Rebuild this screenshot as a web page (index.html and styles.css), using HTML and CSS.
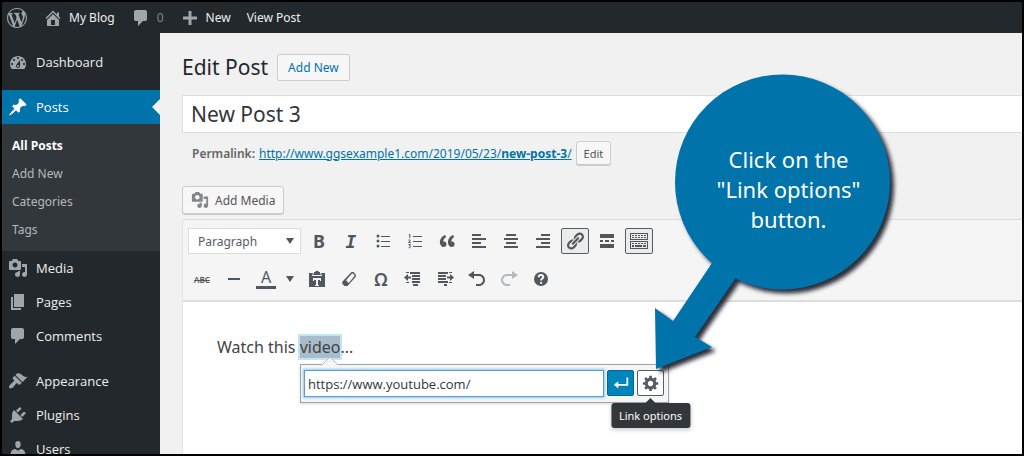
FILE: index.html
```html
<!DOCTYPE html>
<html lang="en">
<head>
<meta charset="utf-8">
<title>Edit Post</title>
<link rel="stylesheet" href="styles.css">
</head>
<body>
<div class="app">
  <header class="adminbar">
    <a class="bar-item bar-logo" href="#" aria-label="WordPress"><svg class="icon" viewBox="0 0 20 20"><path d="M20 10c0-5.51-4.49-10-10-10C4.48 0 0 4.49 0 10c0 5.52 4.48 10 10 10 5.51 0 10-4.48 10-10zM7.78 15.37L4.37 6.22c.55-.02 1.17-.08 1.17-.08.5-.06.44-1.13-.06-1.11 0 0-1.45.11-2.37.11-.18 0-.37 0-.58-.01C4.12 2.69 6.87 1.11 10 1.11c2.33 0 4.45.87 6.05 2.34-.68-.11-1.65.39-1.65 1.58 0 .74.45 1.36.9 2.1.35.61.55 1.36.55 2.46 0 1.49-1.4 5-1.4 5l-3.03-8.37c.54-.02.82-.17.82-.17.5-.05.44-1.25-.06-1.22 0 0-1.44.12-2.38.12-.87 0-2.33-.12-2.33-.12-.5-.03-.56 1.2-.06 1.22l.92.08 1.26 3.41zM17.41 10c.24-.64.74-1.87.43-4.25.7 1.29 1.05 2.71 1.05 4.25 0 3.29-1.73 6.24-4.4 7.78.97-2.59 1.94-5.2 2.92-7.78zM6.1 18.09C3.12 16.65 1.11 13.53 1.11 10c0-1.3.23-2.48.72-3.59C3.25 10.3 4.67 14.2 6.1 18.09zm4.03-6.63l2.58 6.98c-.86.29-1.76.45-2.71.45-.79 0-1.57-.11-2.29-.33.81-2.38 1.62-4.74 2.42-7.1z"/></svg></a>
    <a class="bar-item" href="#"><svg class="icon" viewBox="0 0 20 20"><path d="M16 8.5l1.53 1.53-1.06 1.06L10 4.6l-6.47 6.49-1.06-1.06L10 2.5l4 4v-2h2v4zm-6-2.46l6 5.99V18H4v-5.97zM12 17v-5H8v5h4z"/></svg>My Blog</a>
    <a class="bar-item bar-count" href="#"><svg class="icon" viewBox="0 0 20 20"><path d="M5 2h9q.82 0 1.41.59T16 4v7q0 .82-.59 1.41T14 13h-2l-5 5v-5H5q-.82 0-1.41-.59T3 11V4q0-.82.59-1.41T5 2z"/></svg>0</a>
    <a class="bar-item" href="#"><svg class="icon" viewBox="0 0 20 20"><path d="M17 8.500v3h-5.500V17h-3v-5.500H3v-3h5.500V3h3v5.500z"/></svg>New</a>
    <a class="bar-item" href="#">View Post</a>
  </header>
  <div class="body">
    <nav class="sidebar">
      <a class="menu-item menu-end" href="#"><svg class="icon" viewBox="0 0 20 20"><path fill-rule="evenodd" d="M3.760 17h12.480c1.100-1.370 1.760-3.110 1.760-5 0-4.420-3.580-8-8-8s-8 3.580-8 8c0 1.890.66 3.630 1.760 5zM10 5c.55 0 1 .45 1 1s-.45 1-1 1-1-.45-1-1 .45-1 1-1zM6 7c.55 0 1 .45 1 1s-.45 1-1 1-1-.45-1-1 .45-1 1-1zm8 0c.55 0 1 .45 1 1s-.45 1-1 1-1-.45-1-1 .45-1 1-1zm-5.370 5.550L12 8v6c0 1.100-.9 2-2 2s-2-.9-2-2c0-.57.24-1.080.63-1.450zM4 11c.55 0 1 .45 1 1s-.45 1-1 1-1-.45-1-1 .45-1 1-1zm12 0c.55 0 1 .45 1 1s-.45 1-1 1-1-.45-1-1 .45-1 1-1zm-5 3c0-.55-.45-1-1-1s-1 .45-1 1 .45 1 1 1 1-.45 1-1z"/></svg>Dashboard</a>
      <a class="menu-item current" href="#"><svg class="icon" viewBox="0 0 20 20"><path d="M10.44 3.02l1.82-1.82 6.36 6.35-1.83 1.82c-1.05-.68-2.48-.57-3.41.36l-.75.75c-.92.93-1.04 2.35-.35 3.41l-1.83 1.82-2.41-2.41-2.8 2.79c-.42.42-3.38 2.71-3.8 2.29s1.86-3.39 2.28-3.81l2.79-2.79L4.1 9.36l1.83-1.82c1.05.69 2.48.57 3.4-.36l.75-.75c.93-.92 1.05-2.35.36-3.41z"/></svg>Posts</a>
      <div class="submenu">
        <a class="active" href="#">All Posts</a>
        <a href="#">Add New</a>
        <a href="#">Categories</a>
        <a href="#">Tags</a>
      </div>
      <a class="menu-item" href="#"><svg class="icon" viewBox="0 0 20 20"><path d="M13 11V4c0-.55-.45-1-1-1h-1.67L9 1H5L3.67 3H2c-.55 0-1 .45-1 1v7c0 .55.45 1 1 1h10c.55 0 1-.45 1-1zM7 4.5c1.38 0 2.5 1.12 2.5 2.5S8.38 9.5 7 9.5 4.5 8.38 4.5 7 5.62 4.5 7 4.5zM14 6h5v10.5c0 1.38-1.12 2.5-2.5 2.5S14 17.88 14 16.5s1.12-2.5 2.5-2.5c.17 0 .34.02.5.05V9h-3V6zm-4 8.05V13h2v3.5c0 1.38-1.12 2.5-2.5 2.5S7 17.88 7 16.5 8.12 14 9.5 14c.17 0 .34.02.5.05z"/></svg>Media</a>
      <a class="menu-item" href="#"><svg class="icon" viewBox="0 0 20 20"><path d="M6 15V2h10v13H6zm-1 1h8v2H3V5h2v11z"/></svg>Pages</a>
      <a class="menu-item menu-end" href="#"><svg class="icon" viewBox="0 0 20 20"><path d="M5 2h9q.82 0 1.41.59T16 4v7q0 .82-.59 1.41T14 13h-2l-5 5v-5H5q-.82 0-1.410-.59T3 11V4q0-.82.59-1.41T5 2z"/></svg>Comments</a>
      <a class="menu-item" href="#"><svg class="icon" viewBox="0 0 20 20"><path d="M14.480 11.060L7.410 3.990l1.500-1.500c.5-.56 2.300-.47 3.510.32 1.210.8 1.430 1.280 2.910 2.100 1.180.64 2.450 1.260 4.450.85zm-.71.71L6.700 4.700 4.930 6.470c-.39.39-.39 1.020 0 1.410l1.060 1.060c.39.39.39 1.030 0 1.420-.6.6-1.430 1.110-2.210 1.690-.35.26-.7.53-1.010.84C1.430 14.230.4 16.080 1.400 17.070c.99 1 2.840-.03 4.180-1.360.31-.31.58-.66.85-1.020.57-.78 1.080-1.610 1.690-2.210.39-.39 1.020-.39 1.410 0l1.060 1.060c.39.39 1.020.39 1.410 0z"/></svg>Appearance</a>
      <a class="menu-item" href="#"><svg class="icon" viewBox="0 0 20 20"><path d="M13.11 4.36L9.87 7.6 8 5.73l3.24-3.24c.35-.34 1.05-.2 1.56.32.52.51.66 1.21.31 1.55zm-8 1.77l.91-1.12 9.01 9.01-1.19.84c-.71.71-2.63 1.16-3.82 1.16H6.14L4.9 17.26c-.59.59-1.54.59-2.12 0-.59-.58-.59-1.53 0-2.12l1.240-1.240v-3.88c0-1.13.4-3.19 1.09-3.89zm7.260 3.970l3.240-3.240c.34-.35 1.04-.21 1.55.31.52.51.66 1.21.31 1.55l-3.24 3.25z"/></svg>Plugins</a>
      <a class="menu-item" href="#"><svg class="icon" viewBox="0 0 20 20"><path d="M10 9.25c-2.27 0-2.73-3.44-2.73-3.44C7 4.02 7.82 2 9.97 2c2.16 0 2.98 2.02 2.71 3.81 0 0-.41 3.44-2.68 3.44zm0 2.57L12.72 10c2.39 0 4.52 2.33 4.52 4.53v2.49s-3.65 1.13-7.24 1.13c-3.65 0-7.24-1.13-7.24-1.13v-2.49c0-2.25 1.94-4.48 4.47-4.48z"/></svg>Users</a>
    </nav>
    <main class="content">
      <div class="heading">
        <h1>Edit Post</h1>
        <a class="add-new" href="#">Add New</a>
      </div>
      <input class="post-title" type="text" value="New Post 3" aria-label="Title">
      <div class="permalink">
        <strong>Permalink:</strong>
        <a href="#">http://www.ggsexample1.com/2019/05/23/<b>new-post-3</b>/</a>
        <button class="button edit" type="button">Edit</button>
      </div>
      <button class="button add-media" type="button"><svg class="icon" viewBox="0 0 20 20"><path d="M13 11V4c0-.55-.45-1-1-1h-1.67L9 1H5L3.67 3H2c-.55 0-1 .45-1 1v7c0 .55.45 1 1 1h10c.55 0 1-.45 1-1zM7 4.5c1.38 0 2.5 1.12 2.5 2.5S8.38 9.5 7 9.5 4.5 8.38 4.5 7 5.62 4.5 7 4.5zM14 6h5v10.5c0 1.38-1.12 2.5-2.5 2.5S14 17.88 14 16.5s1.120-2.500 2.500-2.500c.17 0 .34.02.5.05V9h-3V6zm-4 8.05V13h2v3.5c0 1.38-1.12 2.5-2.5 2.5S7 17.88 7 16.5 8.120 14 9.500 14c.17 0 .34.02.5.05z"/></svg>Add Media</button>
      <section class="editor">
        <div class="toolbar">
          <div class="tool-row">
            <select class="format" aria-label="Format"><option>Paragraph</option></select>
            <button class="tool tool-bold" type="button" aria-label="Bold">B</button>
            <button class="tool tool-italic" type="button" aria-label="Italic">I</button>
            <button class="tool" type="button" aria-label="Bulleted list"><svg class="icon" viewBox="0 0 20 20"><circle cx="5" cy="5" r="1.500"/><circle cx="5" cy="10" r="1.500"/><circle cx="5" cy="15" r="1.500"/><path d="M8 5h9v1H8zM8 10h9v1H8zM8 15h9v1H8z"/></svg></button>
            <button class="tool" type="button" aria-label="Numbered list"><svg class="icon" viewBox="0 0 20 20"><path d="M8 5h9v1H8zM8 10h9v1H8zM8 15h9v1H8z"/><path class="line" d="M3.800 4l1-.7V7M3.500 9.200c1-1 2-.2 1.500.8L3.500 11.500h2.200M3.500 13.500h2L4.500 15c1.700 0 1.500 2-.9 1.700"/></svg></button>
            <button class="tool" type="button" aria-label="Blockquote"><svg class="icon" viewBox="0 0 20 20"><path d="M9.49 13.22c0-.74-.2-1.38-.61-1.9-.62-.78-1.83-.88-2.53-.72-.29-1.65 1.11-3.75 2.92-4.65L7.88 4c-2.73 1.3-5.42 4.28-4.96 8.05C3.21 14.43 4.59 16 6.54 16c.85 0 1.56-.25 2.12-.75s.83-1.18.83-2.03zm8.05 0c0-.74-.2-1.38-.61-1.9-.63-.78-1.83-.88-2.53-.72-.29-1.65 1.11-3.75 2.92-4.65L15.93 4c-2.73 1.3-5.41 4.28-4.95 8.05.29 2.38 1.66 3.95 3.61 3.95.85 0 1.56-.25 2.12-.75s.83-1.18.83-2.03z"/></svg></button>
            <button class="tool" type="button" aria-label="Align left"><svg class="icon" viewBox="0 0 20 20"><path d="M3 3h9v2H3zM3 7h14v2H3zM3 11h9v2H3zM3 15h14v2H3z"/></svg></button>
            <button class="tool" type="button" aria-label="Align center"><svg class="icon" viewBox="0 0 20 20"><path d="M5 3h10v2H5zM3 7h14v2H3zM5 11h10v2H5zM3 15h14v2H3z"/></svg></button>
            <button class="tool" type="button" aria-label="Align right"><svg class="icon" viewBox="0 0 20 20"><path d="M8 3h9v2H8zM3 7h14v2H3zM8 11h9v2H8zM3 15h14v2H3z"/></svg></button>
            <button class="tool pressed" type="button" aria-label="Insert link"><svg class="icon" viewBox="0 0 20 20"><path d="M17.74 2.76c1.68 1.69 1.68 4.41 0 6.1l-1.53 1.52c-1.12 1.12-2.7 1.47-4.14 1.09l2.62-2.61.76-.77.76-.76c.84-.84.84-2.2 0-3.04-.84-.85-2.2-.85-3.04 0l-.77.76-3.38 3.38c-.37-1.44-.02-3.02 1.1-4.14l1.52-1.53c1.69-1.68 4.42-1.68 6.1 0zM8.59 13.43l5.34-5.34c.42-.42.42-1.1 0-1.52-.44-.43-1.13-.39-1.53 0l-5.33 5.34c-.42.42-.42 1.1 0 1.52.44.43 1.13.39 1.52 0zm-.76 2.29l4.14-4.15c.38 1.44.03 3.02-1.09 4.14l-1.52 1.53c-1.69 1.68-4.41 1.68-6.1 0-1.68-1.68-1.68-4.42 0-6.1l1.53-1.52c1.12-1.12 2.7-1.47 4.14-1.1l-4.14 4.15c-.85.84-.85 2.2 0 3.05.84.84 2.2.84 3.04 0z"/></svg></button>
            <button class="tool" type="button" aria-label="Read more"><svg class="icon" viewBox="0 0 20 20"><path d="M3 3h14v4H3zM3 9h3v2H3zM8 9h4v2H8zM14 9h3v2h-3zM3 13h14v4H3z"/></svg></button>
            <button class="tool pressed" type="button" aria-label="Toolbar toggle"><svg class="icon" viewBox="0 0 20 20"><path fill-rule="evenodd" d="M1 2h18v7H1zM2 3v5h16V3zM1 10h18v8H1zM2 11v6h16v-6z"/><path d="M3 4h2v1H3zM6 4h2v1H6zM9 4h2v1H9zM12 4h2v1h-2zM15 4h2v1h-2zM3 6h2v1H3zM6 6h2v1H6zM9 6h2v1H9zM12 6h2v1h-2zM15 6h2v1h-2zM3 12h2v1H3zM6 12h2v1H6zM9 12h2v1H9zM12 12h2v1h-2zM15 12h2v1h-2zM3 14h2v2H3zM6 14h7v2H6zM14 14h3v2h-3z"/></svg></button>
          </div>
          <div class="tool-row">
            <button class="tool tool-strike" type="button" aria-label="Strikethrough">ABC</button>
            <button class="tool" type="button" aria-label="Horizontal line"><svg class="icon" viewBox="0 0 20 20"><path d="M4 9h12v2H4z"/></svg></button>
            <button class="tool tool-color" type="button" aria-label="Text color"><span>A</span></button>
            <button class="tool tool-arrow" type="button" aria-label="Choose text color"><svg viewBox="0 0 8 6"><path d="M0 0h8L4 6z"/></svg></button>
            <button class="tool" type="button" aria-label="Paste as text"><svg class="icon" viewBox="0 0 20 20"><path fill-rule="evenodd" d="M7 4V3h1.200a2 2 0 0 1 3.600 0H13v1l1 2H6zM2 4h4L5 7h10l-1-3h4v14H2zM6 9v3h1v-1h2v5H8v1h4v-1h-1v-5h2v1h1V9z"/></svg></button>
            <button class="tool" type="button" aria-label="Clear formatting"><svg class="icon" viewBox="0 0 20 20"><path fill-rule="evenodd" d="M12.500 3h2l2.300 2.500v2.200L8.500 17h-3L3.300 14.700v-2zM13 4.500L7 11.300l2.700 2.700 5.800-6.900V6L14 4.500z"/></svg></button>
            <button class="tool tool-omega" type="button" aria-label="Special character">Ω</button>
            <button class="tool" type="button" aria-label="Decrease indent"><svg class="icon" viewBox="0 0 20 20"><path d="M7 3h10v2H7zM9 6h8v2H9zM9 9h8v2H9zM9 12h8v2H9zM10 15h5v2h-5zM1 8.500L5 5v2.500h3v2H5V12zM3 3h3v1H3zM3 13h3v1H3z"/></svg></button>
            <button class="tool" type="button" aria-label="Increase indent"><svg class="icon" viewBox="0 0 20 20"><path d="M3 3h10v2H3zM3 6h8v2H3zM3 9h8v2H3zM3 12h10v2H3zM9 15h3v2H9zM19 8.500L15 5v2.500h-3v2h3V12zM14 3h3v1h-3zM14 13h3v1h-3z"/></svg></button>
            <button class="tool" type="button" aria-label="Undo"><svg class="icon" viewBox="0 0 20 20"><path d="M12 5H7V2L1 6l6 4V7h5c2.200 0 4 1.800 4 4s-1.800 4-4 4H9v2h3c3.300 0 6-2.700 6-6s-2.700-6-6-6z"/></svg></button>
            <button class="tool" type="button" aria-label="Redo" disabled><svg class="icon" viewBox="0 0 20 20"><path d="M8 5h5V2l6 4-6 4V7H8c-2.200 0-4 1.800-4 4s1.800 4 4 4h3v2H8c-3.300 0-6-2.700-6-6s2.700-6 6-6z"/></svg></button>
            <button class="tool" type="button" aria-label="Help"><svg class="icon" viewBox="0 0 20 20"><circle cx="10" cy="10" r="7"/><path class="query" d="M7.700 8.300c0-3 4.800-2.900 4.600-.2-.1 1.500-2.200 1.500-2.200 3.400M10.100 13v1.800"/></svg></button>
          </div>
        </div>
        <div class="document">
          <p>Watch this <mark>video</mark>...</p>
          <form class="link-popup">
            <svg class="pointer" viewBox="0 0 16 9"><path d="M0 9L8 1l8 8"/></svg>
            <input class="link-url" type="text" value="https://www.youtube.com/" aria-label="Link URL">
            <button class="link-button apply" type="button" aria-label="Apply"><svg class="icon" viewBox="0 0 20 20"><path d="M16 4h2v9H7v3l-5-4 5-4v3h9z"/></svg></button>
            <button class="link-button options" type="button" aria-describedby="tip"><svg class="icon" viewBox="0 0 20 20"><path d="M18 12h-2.180c-.17.7-.44 1.350-.81 1.930l1.540 1.540-2.100 2.100-1.540-1.540c-.58.36-1.230.63-1.910.79V19H8v-2.180c-.68-.16-1.330-.43-1.910-.79l-1.540 1.540-2.120-2.120 1.540-1.540c-.36-.58-.63-1.230-.79-1.910H1V9.030h2.170c.16-.7.44-1.350.8-1.940L2.430 5.550l2.100-2.100 1.540 1.540c.58-.37 1.240-.64 1.930-.81V2h3v2.180c.68.16 1.330.43 1.910.79l1.540-1.540 2.120 2.120-1.540 1.540c.36.59.64 1.240.8 1.940H18V12zm-8.500 1.500c1.660 0 3-1.340 3-3s-1.340-3-3-3-3 1.340-3 3 1.340 3 3 3z"/></svg><span class="tooltip" id="tip" role="tooltip">Link options</span></button>
          </form>
        </div>
      </section>
    </main>
  </div>
  <aside class="callout">
    <svg viewBox="0 0 244 300"><circle cx="132.500" cy="110" r="107.500"/><path d="M64 188L90 200L45 265 62 275 6 297 5 236 23 249z"/></svg>
    <p>Click on the<br>"Link options"<br>button.</p>
  </aside>
</div>
</body>
</html>
```
FILE: styles.css
```css
* { box-sizing: border-box; }
body {
  margin: 0;
  font-family: "Noto Sans", "Open Sans", sans-serif;
  font-size: 12px;
  color: #444;
}
a { color: #0073aa; }
button, input, select { font: inherit; color: inherit; margin: 0; }
h1, p { margin: 0; }
.icon { width: 20px; height: 20px; flex: none; display: block; fill: currentColor; }

.app {
  position: relative;
  display: flex;
  flex-direction: column;
  height: 100vh;
  overflow: hidden;
  border: 2px solid #000;
  background: #f1f1f1;
}

.adminbar {
  display: flex;
  align-items: center;
  flex: none;
  height: 31px;
  padding-left: 5px;
  gap: 16px;
  background: #23282d;
}
.bar-item { display: flex; align-items: center; gap: 6px; color: #eee; text-decoration: none; }
.bar-item .icon { color: #a0a5aa; }
.bar-count { color: #82878c; }

.body { display: flex; flex: 1; min-height: 0; }
.sidebar { flex: none; width: 158px; padding-top: 12px; background: #23282d; }
.menu-item {
  display: flex;
  align-items: center;
  height: 34px;
  padding-left: 6px;
  gap: 8px;
  font-family: "Open Sans", sans-serif;
  font-size: 13px;
  color: #eee;
  text-decoration: none;
}
.menu-item .icon { color: #a0a5aa; }
.menu-end { margin-bottom: 11px; }
.current { background: #0073aa; color: #fff; }
.current .icon { color: #fff; }
.current::after {
  content: "";
  margin-left: auto;
  border: 8px solid transparent;
  border-left: 0;
  border-right-color: #f1f1f1;
}
.submenu { display: flex; flex-direction: column; padding: 8px 10px 7px; background: #32373c; }
.submenu a { line-height: 28px; color: #b4b9be; text-decoration: none; }
.submenu .active { font-family: "Open Sans", sans-serif; color: #fff; font-weight: 700; }

.content { display: flex; flex-direction: column; flex: 1; min-width: 0; padding: 20px 0 0 22px; }
.heading { display: flex; align-items: center; gap: 9px; height: 28px; }
h1 { font-size: 21px; font-weight: 400; line-height: 28px; color: #23282d; }
.add-new {
  padding: 0 10px;
  border: 1px solid #ccc;
  border-radius: 2px;
  background: #f7f7f7;
  line-height: 25px;
  text-decoration: none;
}
.post-title {
  flex: none;
  width: 100%;
  height: 38px;
  margin-top: 14px;
  padding: 0 8px;
  border: 1px solid #ddd;
  border-right: 0;
  background: #fff;
  font-size: 21px;
  color: #32373c;
}
.permalink { display: flex; align-items: center; gap: 4px; margin-top: 8px; padding-left: 10px; color: #666; }
.permalink strong { font-weight: 600; }
.permalink b { font-weight: 700; }
.button {
  border: 1px solid #ccc;
  border-radius: 3px;
  background: #f7f7f7;
  box-shadow: 0 1px 0 #ccc;
  color: #555;
}
.edit { height: 24px; padding: 0 7px; font-size: 11px; }
.add-media {
  display: flex;
  align-items: center;
  align-self: flex-start;
  height: 28px;
  margin-top: 21px;
  padding: 0 8px;
  gap: 6px;
}
.add-media .icon { width: 18px; height: 18px; color: #82878c; }

.editor { display: flex; flex-direction: column; flex: 1; margin-top: 5px; border-left: 1px solid #e5e5e5; }
.toolbar {
  display: flex;
  flex-direction: column;
  gap: 10px;
  padding: 7px 5px;
  border-top: 1px solid #ddd;
  border-bottom: 2px solid #ddd;
  background: #f5f5f5;
}
.tool-row { display: flex; gap: 4px; height: 28px; align-items: center; }
.format {
  appearance: none;
  width: 113px;
  height: 26px;
  padding: 0 9px;
  border: 1px solid #ddd;
  border-radius: 0;
  background: #fff url("data:image/svg+xml,%3Csvg xmlns='http://www.w3.org/2000/svg' viewBox='0 0 8 6'%3E%3Cpath fill='%2350575e' d='M0 0h8L4 6z'/%3E%3C/svg%3E") no-repeat right 6px center / 8px 6px;
  color: #555d66;
}
.tool {
  display: flex;
  align-items: center;
  justify-content: center;
  width: 28px;
  height: 26px;
  padding: 0;
  border: 1px solid transparent;
  border-radius: 2px;
  background: none;
  color: #50575e;
}
.tool:disabled { color: #b4b9be; }
.pressed { border-color: #555d66; background: #ebebeb; }
.line { fill: none; stroke: currentColor; stroke-width: 1; }
.query { fill: none; stroke: #fff; stroke-width: 2; }
.tool-bold { font-size: 18px; font-weight: 700; }
.tool-italic { font-family: "DejaVu Sans Mono", monospace; font-size: 18px; font-style: italic; font-weight: 700; }
.tool-strike { font-size: 8px; font-weight: 600; text-decoration: line-through; }
.tool-color span { width: 20px; border-bottom: 3px solid #50575e; font-size: 16px; line-height: 17px; }
.tool-arrow { width: 19px; margin-left: -4px; }
.tool-arrow svg { width: 8px; height: 6px; fill: currentColor; }
.tool-omega { font-size: 18px; font-weight: 600; }

.document { position: relative; flex: 1; padding: 32px 34px; background: #fff; font-size: 16px; line-height: 26px; color: #444; }
mark { background: #a9bccb; box-shadow: 0 0 0 2px #c2e5f2; color: #444; }
.link-popup {
  position: absolute;
  top: 62px;
  left: 117px;
  display: flex;
  gap: 3px;
  padding: 5px 4px 5px 3px;
  border: 1px solid #a0a5aa;
  background: #f5f5f5;
  box-shadow: 0 1px 3px rgba(0, 0, 0, .15);
  font-size: 12px;
}
.pointer { position: absolute; top: -9px; left: 21px; width: 16px; height: 9px; fill: #f5f5f5; stroke: #bbb; }
.link-url {
  width: 300px;
  height: 27px;
  padding: 0 3px;
  border: 1px solid #5b9dd9;
  outline: 0;
  background: #fff;
  box-shadow: 0 0 2px 1px #8fcbe6;
  font-family: "Open Sans", sans-serif;
  font-size: 13px;
  color: #32373c;
}
.link-button {
  position: relative;
  display: flex;
  align-items: center;
  justify-content: center;
  width: 27px;
  height: 26px;
  padding: 0;
  border: 1px solid #555d66;
  border-radius: 2px;
  background: #fff;
  color: #555d66;
}
.apply { border-color: #006799; background: #0085ba; color: #fff; }
.link-button .icon { width: 18px; height: 18px; }
.tooltip {
  position: absolute;
  top: 32px;
  left: 50%;
  transform: translateX(-50%);
  padding: 0 8px;
  border-radius: 3px;
  background: #32373c;
  box-shadow: 0 2px 4px rgba(0, 0, 0, .2);
  font-size: 11px;
  line-height: 25px;
  white-space: nowrap;
  color: #fff;
}
.tooltip::before {
  content: "";
  position: absolute;
  left: 50%;
  bottom: 100%;
  margin-left: -5px;
  border: 5px solid transparent;
  border-top: 0;
  border-bottom-color: #32373c;
}

.callout { position: absolute; top: 70px; left: 648px; width: 244px; }
.callout svg { display: block; width: 244px; height: 300px; overflow: visible; fill: #0073aa; filter: drop-shadow(4px 4px 2px rgba(20, 22, 35, .9)); }
.callout p {
  position: absolute;
  top: 72px;
  left: 31px;
  width: 215px;
  text-align: center;
  font-size: 22px;
  line-height: 30px;
  color: #fff;
}
```
